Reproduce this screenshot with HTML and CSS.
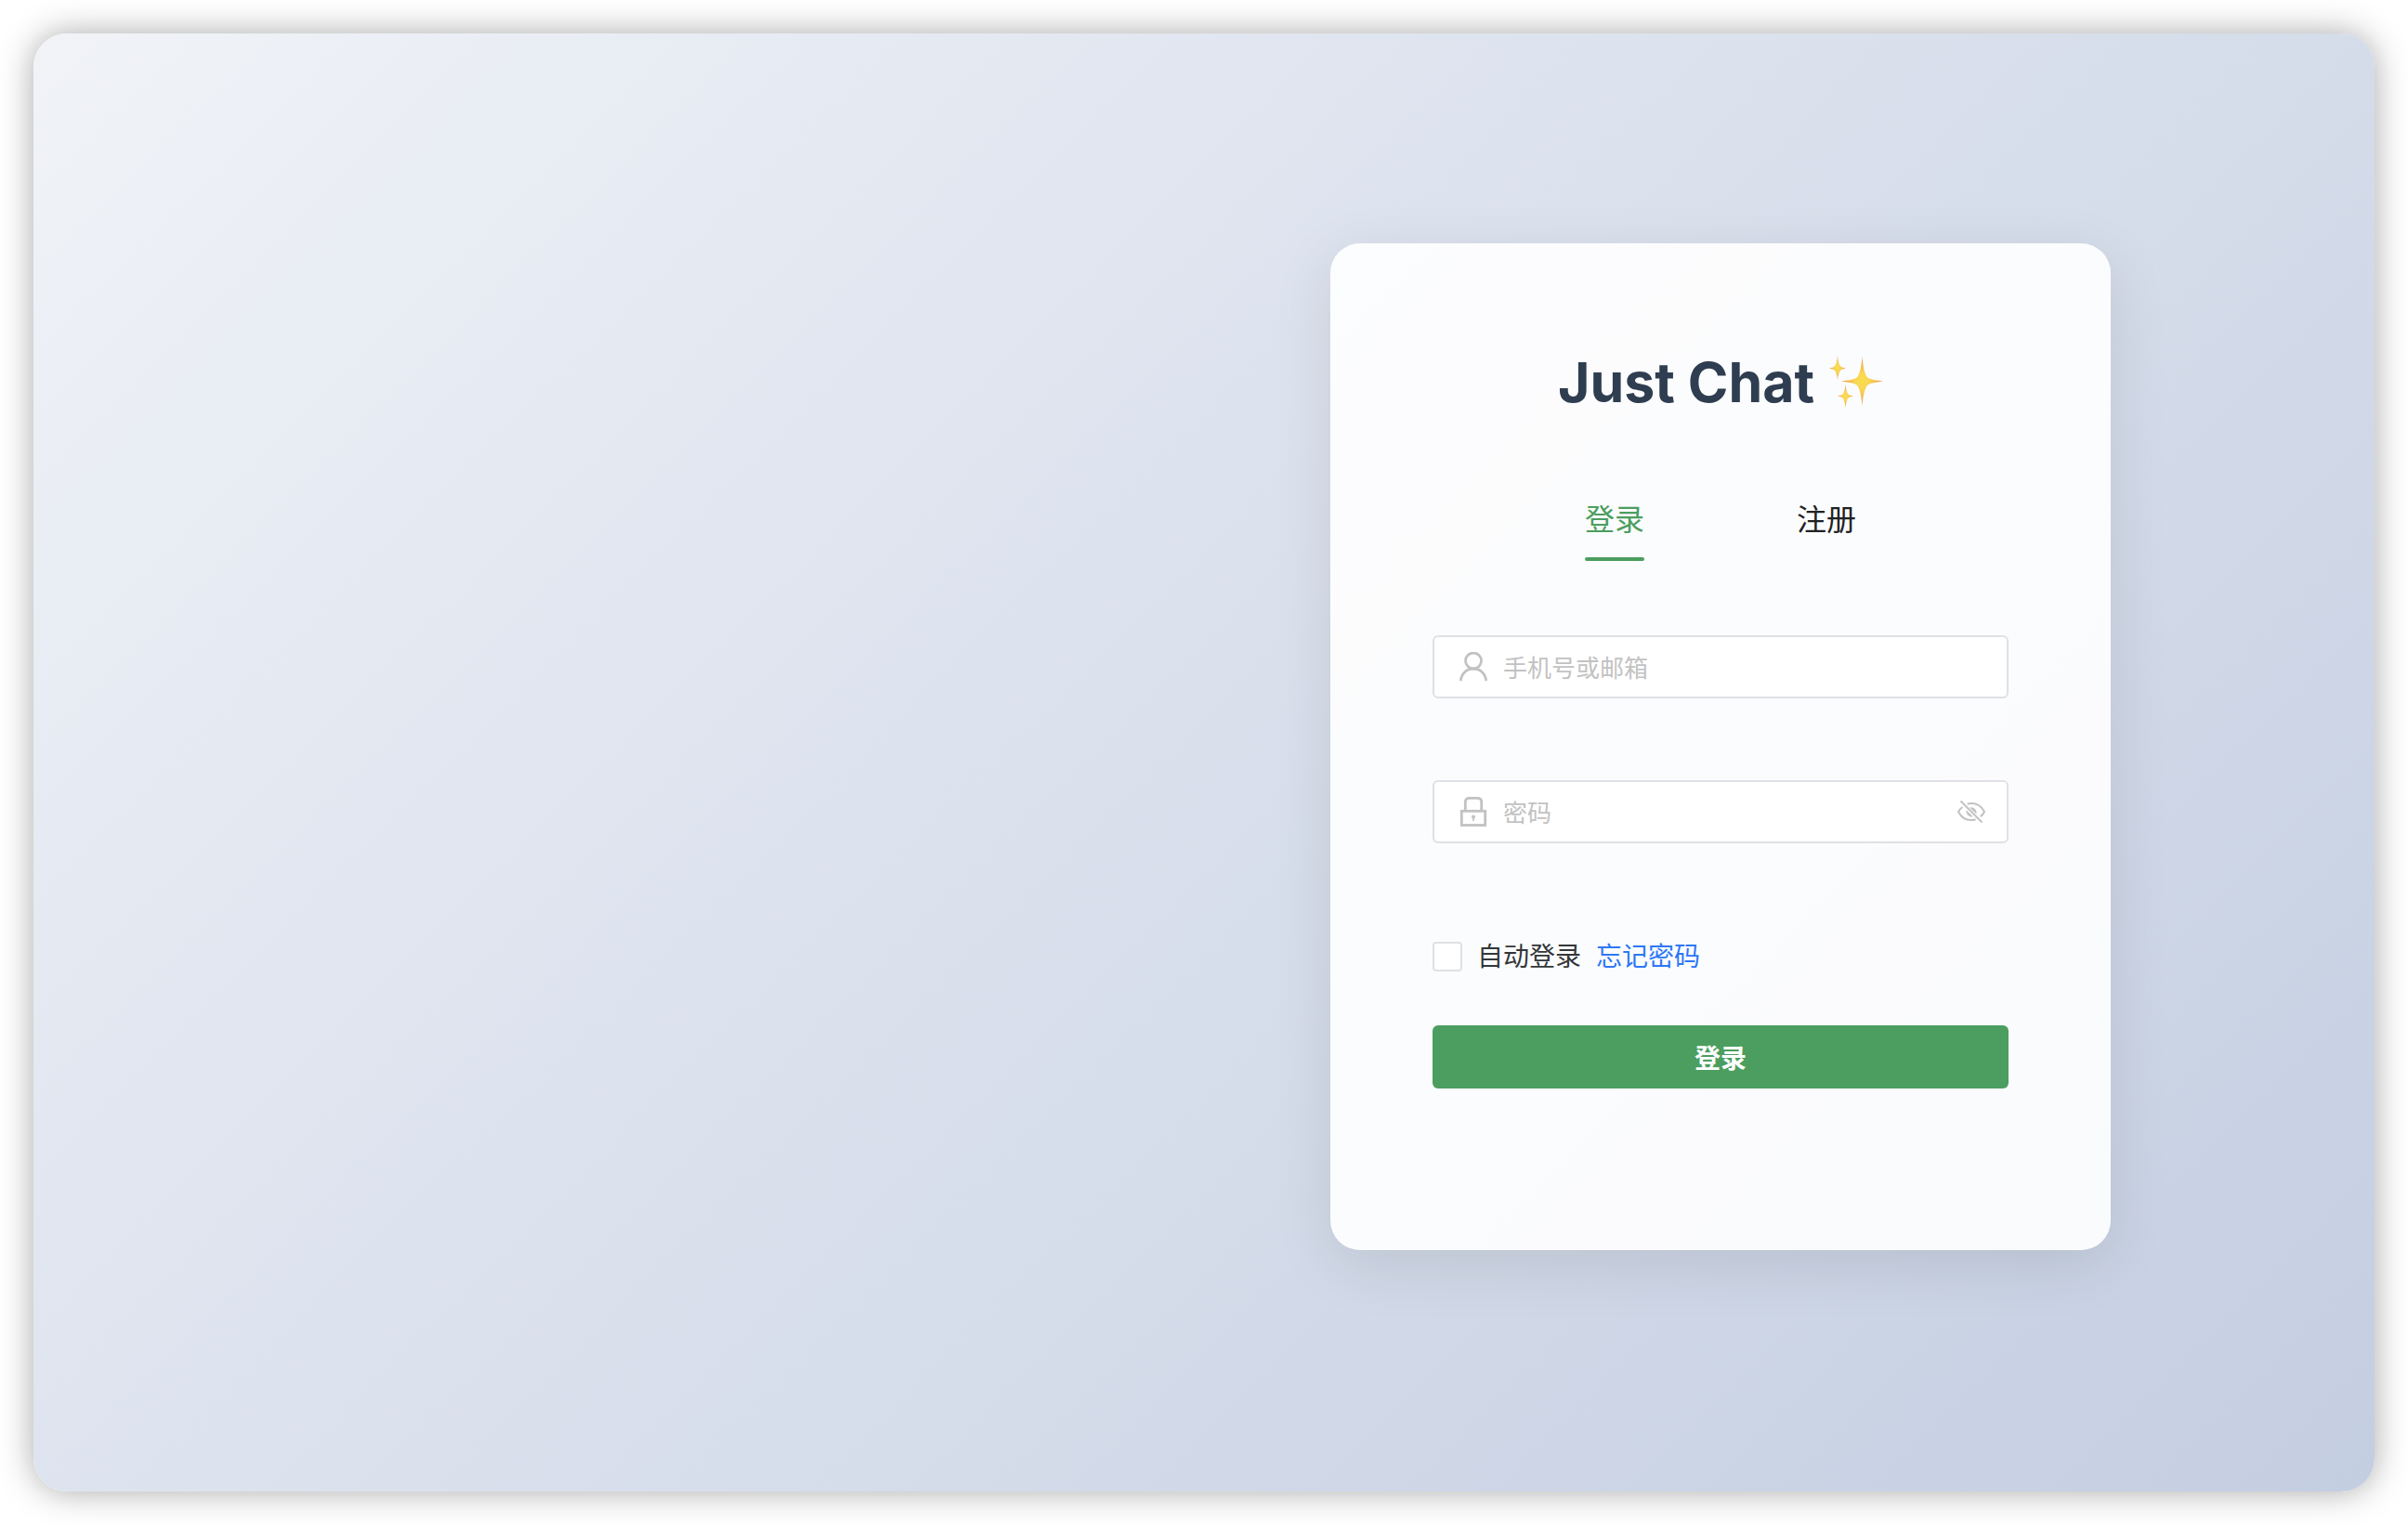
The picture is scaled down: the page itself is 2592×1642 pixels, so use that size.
FILE: index.html
```html
<!DOCTYPE html>
<html lang="zh-CN">
<head>
<meta charset="utf-8">
<title>Just Chat</title>
<meta name="viewport" content="width=device-width, initial-scale=1">
<link rel="stylesheet" href="styles.css">
</head>
<body>
<main class="window">
  <section class="card">
    <h1 class="title">
      Just Chat
      <svg class="sparkles" viewBox="0 0 58 58" aria-hidden="true">
        <defs>
          <radialGradient id="gold">
            <stop offset="0" stop-color="#f7de4e"/>
            <stop offset=".35" stop-color="#fad455"/>
            <stop offset="1" stop-color="#ee9a4e"/>
          </radialGradient>
        </defs>
        <g fill="url(#gold)">
          <path d="M35.500 1C36.500 14 39 22 42 24C46 26 51 26.500 58 27.500C51 28.500 46 29 42 31C39 33 36.500 41 35.500 54C34.500 41 32 33 29 31C25 29 20 28.500 13 27.500C20 26.500 25 26 29 24C32 22 34.500 14 35.500 1Z"/>
          <path d="M9 0C9.500 6 10.500 9 12 11C13.500 12.500 15 13 18 13.500C15 14 13.500 14.500 12 16C10.500 18 9.500 21 9 26C8.500 21 7.500 18 6 16C4.500 14.500 3 14 0 13.500C3 13 4.500 12.500 6 11C7.500 9 8.500 6 9 0Z"/>
          <path d="M17.500 31C18 36 19 39 20 41C21.500 42.500 23 43 26 43.500C23 44 21.500 44.500 20 46C19 48 18 51 17.500 56C17 51 16 48 15 46C13.500 44.500 12 44 9 43.500C12 43 13.500 42.500 15 41C16 39 17 36 17.500 31Z"/>
        </g>
      </svg>
    </h1>

    <div class="tabs" role="tablist">
      <button class="tab tab-active" type="button" role="tab" aria-selected="true">登录</button>
      <button class="tab" type="button" role="tab" aria-selected="false">注册</button>
    </div>

    <form class="form">
      <div class="field">
        <svg class="icon" viewBox="0 0 32 32" aria-hidden="true">
          <g fill="none" stroke="currentColor" stroke-width="2.800">
            <circle cx="16" cy="9.500" r="8.500"/>
            <path d="M2.300 31C3 23.500 8.500 18 16 18S29 23.500 29.700 31"/>
          </g>
        </svg>
        <input class="input" type="text" placeholder="手机号或邮箱" aria-label="手机号或邮箱">
      </div>

      <div class="field">
        <svg class="icon" viewBox="0 0 32 32" aria-hidden="true">
          <g fill="none" stroke="currentColor" stroke-width="2.800">
            <rect x="3.300" y="15.300" width="25.400" height="15.200"/>
            <path d="M7.300 15V5.500Q7.300 1.400 11.500 1.400H20.500Q24.700 1.400 24.700 5.500V15"/>
          </g>
          <circle cx="16" cy="21.600" r="2" fill="currentColor"/>
          <path d="M15.100 22H16.900V26H15.100Z" fill="currentColor"/>
        </svg>
        <input class="input" type="password" placeholder="密码" aria-label="密码">
        <button class="reveal" type="button" aria-label="显示密码">
          <svg class="icon" viewBox="0 0 32 32" aria-hidden="true">
            <g fill="none" stroke="currentColor" stroke-width="2">
              <path d="M6.500 11C4 12.800 2.600 14.800 2 16C4.500 21 9.500 25 16 25C17.600 25 19.300 24.700 20.600 24.200"/>
              <path d="M11.700 7.800C13 7.300 14.500 7 16 7C22.500 7 27.500 11 30 16C29.200 17.800 27.600 19.800 25.700 21.300"/>
              <path d="M4.500 4.500L27.500 27.500"/>
            </g>
            <path d="M14.200 11.400A6 6 0 0 1 21.400 18.600Z" fill="currentColor"/>
            <path d="M10.600 14.200A6 6 0 0 0 17.600 21.300Z" fill="currentColor"/>
          </svg>
        </button>
      </div>

      <div class="options">
        <label class="remember"><input class="checkbox" type="checkbox">自动登录</label>
        <a class="link" href="#">忘记密码</a>
      </div>

      <button class="submit" type="submit">登录</button>
    </form>
  </section>
</main>
</body>
</html>
```
FILE: styles.css
```css
* {
  box-sizing: border-box;
}

body {
  margin: 0;
  padding: 36px;
  background: #fff;
  font-family: Inter, "Noto Sans CJK SC", sans-serif;
}

button,
input {
  font-family: inherit;
}

.window {
  display: flex;
  align-items: center;
  justify-content: flex-end;
  min-height: calc(100vh - 72px);
  padding: 0 284px 34px 0;
  border-radius: 36px;
  background: linear-gradient(135deg, #f1f3f7 0%, #e4e9f2 25%, #c4cee1 100%);
  box-shadow: 0 0 36px rgba(0, 0, 0, 0.34);
}

.card {
  width: 840px;
  padding: 110px 110px 174px;
  border-radius: 32px;
  background: rgba(255, 255, 255, 0.9);
  box-shadow: 0 16px 64px rgba(0, 0, 0, 0.1);
}

.title {
  display: flex;
  align-items: center;
  justify-content: center;
  gap: 16px;
  margin: 0;
  color: #2f3d50;
  font-size: 59px;
  font-weight: 700;
  line-height: 80px;
}

.sparkles {
  width: 58px;
  height: 58px;
}

.tabs {
  display: flex;
  justify-content: center;
  gap: 164px;
  margin: 80px 0;
}

.tab {
  padding: 4px 0 0;
  border: 0;
  background: none;
  color: #1f2225;
  font-size: 32px;
  line-height: 48px;
}

.tab::after {
  display: block;
  height: 4px;
  margin-top: 16px;
  border-radius: 2px;
  content: "";
}

.tab-active {
  color: #4b9e5f;
}

.tab-active::after {
  background: #4b9e5f;
}

.form {
  display: flex;
  flex-direction: column;
}

.field {
  display: flex;
  align-items: center;
  height: 68px;
  margin-bottom: 88px;
  padding: 0 22px 0 26px;
  border: 2px solid #e0e0e6;
  border-radius: 6px;
  background: #fff;
  color: #c2c2c2;
}

.icon {
  flex: none;
  width: 32px;
  height: 32px;
}

.input {
  flex: 1;
  min-width: 0;
  padding: 4px 0 0 16px;
  border: 0;
  outline: 0;
  background: none;
  color: #333639;
  font-size: 26px;
  line-height: 40px;
}

.input::placeholder {
  color: #c2c2c2;
  opacity: 1;
}

.reveal {
  display: flex;
  padding: 0;
  border: 0;
  background: none;
  color: #c2c2c2;
}

.options {
  display: flex;
  align-items: center;
  gap: 16px;
  margin: 14px 0 54px;
  font-size: 28px;
  line-height: 40px;
}

.remember {
  display: flex;
  align-items: center;
  gap: 16px;
  color: #333639;
}

.checkbox {
  width: 32px;
  height: 32px;
  margin: 0;
  border: 2px solid #e0e0e6;
  border-radius: 4px;
  background: #fff;
  appearance: none;
}

.checkbox:checked {
  border-color: #4b9e5f;
  background: #4b9e5f;
}

.link {
  color: #2d77f6;
  text-decoration: none;
}

.submit {
  height: 68px;
  padding: 0;
  border: 0;
  border-radius: 6px;
  background: #4b9e5f;
  color: #fff;
  font-size: 28px;
  font-weight: 700;
}
```
